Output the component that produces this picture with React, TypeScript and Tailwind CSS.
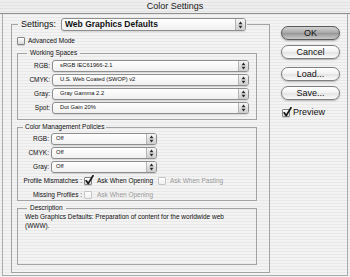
import React from "react";

function Arrows() {
  return (
    <svg width="5" height="8" viewBox="0 0 5 8">
      <path d="M2.5 0.6 L4.5 3.2 L0.5 3.2 Z" fill="#2a2a2a" />
      <path d="M2.5 7.4 L4.5 4.8 L0.5 4.8 Z" fill="#2a2a2a" />
    </svg>
  );
}

function Popup({ text, width, textClass }: { text: string; width: string; textClass: string }) {
  return (
    <div
      className={`flex h-[12px] items-stretch rounded-[3px] border border-[#8e8e8e] bg-[image:linear-gradient(#ffffff,#f0f0f0)] shadow-[0_1px_1px_rgba(0,0,0,0.12)] ${width}`}
    >
      <div className={`flex flex-1 items-center overflow-hidden whitespace-nowrap text-[#111] ${textClass}`}>{text}</div>
      <div className="flex w-[10px] items-center justify-center rounded-r-[2px] border-l border-[#b4b4b4] bg-[image:linear-gradient(#f6f6f6,#cdcdcd)]">
        <Arrows />
      </div>
    </div>
  );
}

function Check({ checked, disabled }: { checked?: boolean; disabled?: boolean }) {
  return (
    <div
      className={
        disabled
          ? "relative h-[8px] w-[8px] shrink-0 rounded-[1px] border border-[#c6c6c6] bg-[image:linear-gradient(#ffffff,#efefef)]"
          : "relative h-[8px] w-[8px] shrink-0 rounded-[1px] border border-[#858585] bg-[image:linear-gradient(#ffffff,#d9d9d9)] shadow-[0_1px_1px_rgba(0,0,0,0.15)]"
      }
    >
      {checked && (
        <svg className="absolute left-[0px] top-[-3px]" width="9" height="10" viewBox="0 0 9 10">
          <path d="M1.2 5.8 L3.2 8.6 L8 0.8" stroke="#151515" strokeWidth="1.7" fill="none" strokeLinecap="round" strokeLinejoin="round" />
        </svg>
      )}
    </div>
  );
}

function Btn({ label, primary }: { label: string; primary?: boolean }) {
  return (
    <div
      className={
        primary
          ? "flex h-[14px] w-[59px] items-center justify-center rounded-full border border-[#5a5a5a] bg-[image:linear-gradient(#d4d4d4,#a6a6a6_50%,#979797_52%,#c9c9c9)] text-[9px] leading-none text-[#111] shadow-[0_1px_1.5px_rgba(0,0,0,0.3)]"
          : "flex h-[14px] w-[59px] items-center justify-center rounded-full border border-[#7f7f7f] bg-[image:linear-gradient(#ffffff,#f1f1f1_50%,#e3e3e3_52%,#fbfbfb)] text-[9px] leading-none text-[#111] shadow-[0_1px_1.5px_rgba(0,0,0,0.25)]"
      }
    >
      {label}
    </div>
  );
}

export default function App() {
  const ws = [
    ["RGB:", "sRGB IEC61966-2.1"],
    ["CMYK:", "U.S. Web Coated (SWOP) v2"],
    ["Gray:", "Gray Gamma 2.2"],
    ["Spot:", "Dot Gain 20%"],
  ];
  const cmp = ["RGB:", "CMYK:", "Gray:"];
  return (
    <div className="flex h-[277px] w-[350px] flex-col overflow-hidden bg-[image:repeating-linear-gradient(180deg,#f3f3f3_0px,#f3f3f3_2px,#e8e8e8_2px,#e8e8e8_3px)] font-['Liberation_Sans',Arial,sans-serif] text-[#111]">
      {/* title bar */}
      <div className="flex h-[14px] shrink-0 items-center justify-center border-b border-[#8f8f8f] bg-[image:repeating-linear-gradient(180deg,#eeeeee_0px,#eeeeee_2px,#e2e2e2_2px,#e2e2e2_3px)] text-[9px] leading-none text-[#1a1a1a]">
        Color Settings
      </div>
      {/* body */}
      <div className="flex-1 px-[2px] pb-[1px]">
        <div className="flex h-full border-x border-b border-[#ababab]">
          {/* left */}
          <fieldset className="ml-[8px] mt-[4px] h-[255px] w-[259px] min-w-0 border border-[#a3a3a3] p-0">
            <legend className="ml-[6px] flex items-center pl-[3px] pr-[1px]">
              <span className="w-[40px] text-[9px] leading-none text-[#111]">Settings:</span>
              <div className="flex h-[13px] w-[185px] items-stretch rounded-[3px] border border-[#8e8e8e] bg-[image:linear-gradient(#ffffff,#f0f0f0)] shadow-[0_1px_1px_rgba(0,0,0,0.12)]">
                <div className="flex flex-1 items-center pl-[3px] text-[8.5px] font-bold leading-none text-[#111]">
                  Web Graphics Defaults
                </div>
                <div className="flex w-[10px] items-center justify-center rounded-r-[2px] border-l border-[#b4b4b4] bg-[image:linear-gradient(#f6f6f6,#cdcdcd)]">
                  <Arrows />
                </div>
              </div>
            </legend>

            <div className="ml-[5px] mt-[6px] flex h-[8px] items-center">
              <Check />
              <span className="ml-[3px] text-[6.5px] leading-none">Advanced Mode</span>
            </div>

            {/* Working Spaces */}
            <fieldset className="ml-[5px] mt-[4px] w-[240px] min-w-0 border border-[#a3a3a3] p-0 pb-[5px]">
              <legend className="ml-[9px] px-[3px] text-[6.5px] leading-[8px]">Working Spaces</legend>
              <div className="mt-[3px] flex flex-col gap-[2px]">
                {ws.map(([l, v]) => (
                  <div key={l} className="flex h-[12px] items-center">
                    <span className="w-[32px] text-right text-[6.5px] leading-none">{l}</span>
                    <div className="ml-[2px]">
                      <Popup text={v} width="w-[197px]" textClass="pl-[7px] text-[5.75px] leading-none" />
                    </div>
                  </div>
                ))}
              </div>
            </fieldset>

            {/* Color Management Policies */}
            <fieldset className="ml-[5px] mt-[3px] w-[240px] min-w-0 border border-[#a3a3a3] p-0 pb-[1px]">
              <legend className="ml-[5px] px-[2px] text-[6.5px] leading-[8px]">Color Management Policies</legend>
              <div className="mt-[2px] flex flex-col gap-[2px]">
                {cmp.map((l) => (
                  <div key={l} className="flex h-[12px] items-center">
                    <span className="w-[31px] text-right text-[6.5px] leading-none">{l}</span>
                    <div className="ml-[2px]">
                      <Popup text="Off" width="w-[106px]" textClass="pl-[4px] text-[5.75px] leading-none" />
                    </div>
                  </div>
                ))}
              </div>
              <div className="mt-[4px] flex h-[8px] items-center">
                <span className="w-[64px] text-right text-[6.5px] leading-none">Profile Mismatches :</span>
                <div className="ml-[2px]">
                  <Check checked />
                </div>
                <span className="ml-[5px] w-[61px] text-[6.5px] leading-none">Ask When Opening</span>
                <Check disabled />
                <span className="ml-[4px] text-[6.5px] leading-none text-[#9a9a9a]">Ask When Pasting</span>
              </div>
              <div className="mt-[6px] flex h-[8px] items-center">
                <span className="w-[64px] text-right text-[6.5px] leading-none">Missing Profiles :</span>
                <div className="ml-[2px]">
                  <Check disabled />
                </div>
                <span className="ml-[5px] text-[6.5px] leading-none text-[#9a9a9a]">Ask When Opening</span>
              </div>
            </fieldset>

            {/* Description */}
            <fieldset className="ml-[5px] mt-[3px] h-[61px] w-[240px] min-w-0 border border-[#a3a3a3] p-0">
              <legend className="ml-[9px] px-[3px] text-[6.5px] leading-[8px]">Description</legend>
              <div className="ml-[7px] text-[6.5px] leading-[9px]">
                Web Graphics Defaults: Preparation of content for the worldwide web
                <br />
                (WWW).
              </div>
            </fieldset>
          </fieldset>

          {/* right column */}
          <div className="ml-[11px] mt-[12px] flex flex-col">
            <Btn label="OK" primary />
            <div className="mt-[5px]">
              <Btn label="Cancel" />
            </div>
            <div className="mt-[8px]">
              <Btn label="Load..." />
            </div>
            <div className="mt-[5px]">
              <Btn label="Save..." />
            </div>
            <div className="ml-[1px] mt-[8px] flex h-[9px] items-center">
              <Check checked />
              <span className="ml-[3px] text-[9px] leading-none">Preview</span>
            </div>
          </div>
        </div>
      </div>
    </div>
  );
}
